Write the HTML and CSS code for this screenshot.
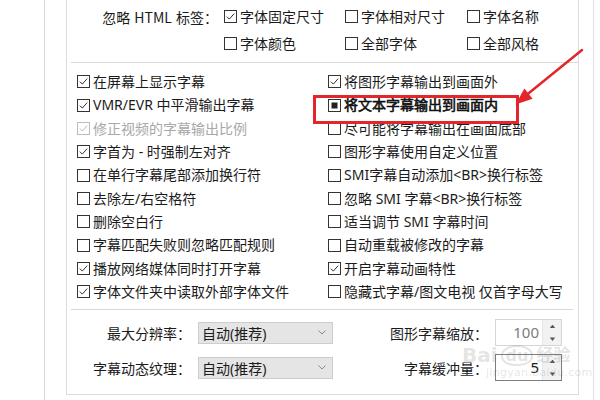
FILE: index.html
```html
<!DOCTYPE html>
<html lang="zh-CN">
<head>
<meta charset="utf-8">
<link rel="stylesheet" href="styles.css">
</head>
<body>
<div class="page">
  <div class="gutter"></div>
  <div class="panel">
    <div class="group">
      <div class="tags">
        <div class="tag-label">忽略 HTML 标签：</div>
        <div class="cb"><svg class="box" viewBox="0 0 13 13"><rect x="0.5" y="0.5" width="12" height="12"/><path d="M2.8 6.6 L5.3 9.1 L10.2 3.6"/></svg><span>字体固定尺寸</span></div>
        <div class="cb"><svg class="box" viewBox="0 0 13 13"><rect x="0.5" y="0.5" width="12" height="12"/></svg><span>字体相对尺寸</span></div>
        <div class="cb"><svg class="box" viewBox="0 0 13 13"><rect x="0.5" y="0.5" width="12" height="12"/></svg><span>字体名称</span></div>
        <div></div>
        <div class="cb"><svg class="box" viewBox="0 0 13 13"><rect x="0.5" y="0.5" width="12" height="12"/></svg><span>字体颜色</span></div>
        <div class="cb"><svg class="box" viewBox="0 0 13 13"><rect x="0.5" y="0.5" width="12" height="12"/></svg><span>全部字体</span></div>
        <div class="cb"><svg class="box" viewBox="0 0 13 13"><rect x="0.5" y="0.5" width="12" height="12"/></svg><span>全部风格</span></div>
      </div>
      <div class="sep"></div>
      <div class="opts">
        <div class="cb"><svg class="box" viewBox="0 0 13 13"><rect x="0.5" y="0.5" width="12" height="12"/><path d="M2.8 6.6 L5.3 9.1 L10.2 3.6"/></svg><span>在屏幕上显示字幕</span></div>
        <div class="cb"><svg class="box" viewBox="0 0 13 13"><rect x="0.5" y="0.5" width="12" height="12"/><path d="M2.8 6.6 L5.3 9.1 L10.2 3.6"/></svg><span>VMR/EVR 中平滑输出字幕</span></div>
        <div class="cb disabled"><svg class="box" viewBox="0 0 13 13"><rect x="0.5" y="0.5" width="12" height="12"/><path d="M2.8 6.6 L5.3 9.1 L10.2 3.6"/></svg><span>修正视频的字幕输出比例</span></div>
        <div class="cb"><svg class="box" viewBox="0 0 13 13"><rect x="0.5" y="0.5" width="12" height="12"/><path d="M2.8 6.6 L5.3 9.1 L10.2 3.6"/></svg><span>字首为 - 时强制左对齐</span></div>
        <div class="cb"><svg class="box" viewBox="0 0 13 13"><rect x="0.5" y="0.5" width="12" height="12"/></svg><span>在单行字幕尾部添加换行符</span></div>
        <div class="cb"><svg class="box" viewBox="0 0 13 13"><rect x="0.5" y="0.5" width="12" height="12"/></svg><span>去除左/右空格符</span></div>
        <div class="cb"><svg class="box" viewBox="0 0 13 13"><rect x="0.5" y="0.5" width="12" height="12"/></svg><span>删除空白行</span></div>
        <div class="cb"><svg class="box" viewBox="0 0 13 13"><rect x="0.5" y="0.5" width="12" height="12"/></svg><span>字幕匹配失败则忽略匹配规则</span></div>
        <div class="cb"><svg class="box" viewBox="0 0 13 13"><rect x="0.5" y="0.5" width="12" height="12"/><path d="M2.8 6.6 L5.3 9.1 L10.2 3.6"/></svg><span>播放网络媒体同时打开字幕</span></div>
        <div class="cb"><svg class="box" viewBox="0 0 13 13"><rect x="0.5" y="0.5" width="12" height="12"/><path d="M2.8 6.6 L5.3 9.1 L10.2 3.6"/></svg><span>字体文件夹中读取外部字体文件</span></div>

        <div class="cb"><svg class="box" viewBox="0 0 13 13"><rect x="0.5" y="0.5" width="12" height="12"/><path d="M2.8 6.6 L5.3 9.1 L10.2 3.6"/></svg><span>将图形字幕输出到画面外</span></div>
        <div class="cb marked"><svg class="box" viewBox="0 0 13 13"><rect x="0.5" y="0.5" width="12" height="12"/><rect class="fill" x="3.5" y="3.5" width="6" height="6"/></svg><span class="strong">将文本字幕输出到画面内</span></div>
        <div class="cb"><svg class="box" viewBox="0 0 13 13"><rect x="0.5" y="0.5" width="12" height="12"/></svg><span>尽可能将字幕输出在画面底部</span></div>
        <div class="cb"><svg class="box" viewBox="0 0 13 13"><rect x="0.5" y="0.5" width="12" height="12"/></svg><span>图形字幕使用自定义位置</span></div>
        <div class="cb"><svg class="box" viewBox="0 0 13 13"><rect x="0.5" y="0.5" width="12" height="12"/></svg><span>SMI字幕自动添加&lt;BR&gt;换行标签</span></div>
        <div class="cb"><svg class="box" viewBox="0 0 13 13"><rect x="0.5" y="0.5" width="12" height="12"/></svg><span>忽略 SMI 字幕&lt;BR&gt;换行标签</span></div>
        <div class="cb"><svg class="box" viewBox="0 0 13 13"><rect x="0.5" y="0.5" width="12" height="12"/></svg><span>适当调节 SMI 字幕时间</span></div>
        <div class="cb"><svg class="box" viewBox="0 0 13 13"><rect x="0.5" y="0.5" width="12" height="12"/></svg><span>自动重载被修改的字幕</span></div>
        <div class="cb"><svg class="box" viewBox="0 0 13 13"><rect x="0.5" y="0.5" width="12" height="12"/><path d="M2.8 6.6 L5.3 9.1 L10.2 3.6"/></svg><span>开启字幕动画特性</span></div>
        <div class="cb"><svg class="box" viewBox="0 0 13 13"><rect x="0.5" y="0.5" width="12" height="12"/></svg><span>隐藏式字幕/图文电视 仅首字母大写</span></div>
      </div>
      <div class="sep sep2"></div>
      <div class="form">
        <div class="flabel">最大分辨率：</div>
        <div class="select"><span>自动(推荐)</span><svg class="chev" viewBox="0 0 8 5"><path d="M0.5 0.5 L4 4 L7.5 0.5"/></svg></div>
        <div class="flabel">图形字幕缩放：</div>
        <div class="spin"><span class="val muted">100</span><span class="btns"><svg viewBox="0 0 6 4"><path d="M0 4 L3 0 L6 4Z"/></svg><svg viewBox="0 0 6 4"><path d="M0 0 L6 0 L3 4Z"/></svg></span></div>
        <div class="flabel">字幕动态纹理：</div>
        <div class="select"><span>自动(推荐)</span><svg class="chev" viewBox="0 0 8 5"><path d="M0.5 0.5 L4 4 L7.5 0.5"/></svg></div>
        <div class="flabel">字幕缓冲量：</div>
        <div class="spin focus"><span class="val">5</span><span class="btns"><svg viewBox="0 0 6 4"><path d="M0 4 L3 0 L6 4Z"/></svg><svg viewBox="0 0 6 4"><path d="M0 0 L6 0 L3 4Z"/></svg></span></div>
      </div>
    </div>
  </div>
  <div class="rest"></div>

  <svg class="arrow" viewBox="0 0 600 400">
    <line x1="582" y1="50" x2="524" y2="97"/>
    <polygon points="515.5,104.5 532.6,98.8 524.4,88.6"/>
  </svg>

  <div class="watermark">
    <div class="wm-top"><span class="wm-bai">Bai</span><span class="wm-du">du</span><span class="wm-jy">经验</span></div>
    <div class="wm-url">jingyan.baidu.com</div>
  </div>
</div>
</body>
</html>
```

FILE: styles.css
```css
* { box-sizing: border-box; }
html, body { margin: 0; padding: 0; background: #fff; }
body {
  width: 600px;
  height: 400px;
  overflow: hidden;
  font-family: "Noto Sans", "Noto Sans CJK SC", sans-serif;
  font-size: 14px;
  color: #1b1b1b;
}
.page {
  position: relative;
  display: flex;
  width: 600px;
  height: 400px;
}
.gutter {
  width: 45px;
  height: 400px;
  border-right: 1px solid #dadada;
}
.panel {
  width: 549px;
  height: 400px;
  padding-left: 21px;
  border-right: 1px solid #e2e2e2;
}
.rest { flex: 1; }
.group {
  width: 513px;
  height: 395px;
  border: 1px solid #dcdcdc;
  border-top: none;
}

.cb {
  display: flex;
  align-items: center;
  white-space: nowrap;
  line-height: 1;
}
.box {
  width: 13px;
  height: 13px;
  flex: none;
  margin-right: 3px;
}
.box rect { fill: #fff; stroke: #333; stroke-width: 1; }
.box path { fill: none; stroke: #333; stroke-width: 1; }
.box rect.fill { fill: #222; stroke: none; }
.disabled { color: #a8a8a8; }
.disabled .box rect { stroke: #bdbdbd; }
.disabled .box path { stroke: #bdbdbd; }
.strong {
  color: #111;
  -webkit-text-stroke: 0.6px #111;
}

.tags {
  display: grid;
  grid-template-columns: 157px 121px 122px 1fr;
  grid-auto-rows: 27px;
  padding-top: 3px;
  align-items: center;
}
.tag-label {
  text-align: right;
  padding-right: 6px;
  font-family: "Noto Sans CJK SC", sans-serif;
  word-spacing: 1px;
}

.sep {
  height: 1px;
  background: #d9d9d9;
  margin: 5px 0 0 4px;
}
.sep2 {
  margin: 5.33px 5px 0 4px;
}

.opts {
  display: grid;
  grid-template-columns: 251px 1fr;
  grid-template-rows: repeat(10, 23.33px);
  grid-auto-flow: column;
  padding: 7.33px 0 0 10px;
  align-items: center;
}
.marked { position: relative; height: 100%; }
.marked::before {
  content: "";
  position: absolute;
  left: -15px;
  top: 1.33px;
  width: 200px;
  height: 23px;
  border: 3px solid #e3262c;
}

.form {
  display: grid;
  grid-template-columns: 116px 135px 132px 67px;
  grid-auto-rows: 35px;
  column-gap: 15px;
  padding-top: 5.5px;
  align-items: center;
}
.flabel {
  text-align: right;
  white-space: nowrap;
  margin-right: -8px;
}
.select {
  height: 22px;
  background: #e5e5e5;
  border: 1px solid #cdcdcd;
  display: flex;
  align-items: center;
  justify-content: space-between;
  padding: 0 6px 0 3px;
  white-space: nowrap;
}
.chev { width: 8px; height: 5px; }
.chev path { fill: none; stroke: #8a8a8a; stroke-width: 1; }

.spin {
  height: 27px;
  border: 1px solid #d6d6d6;
  background: #fff;
  display: flex;
}
.spin.focus { border-color: #7d7d7d; }
.val {
  flex: 1;
  text-align: right;
  padding-right: 3px;
  line-height: 25px;
  font-size: 15px;
  color: #222;
}
.val.muted { color: #7b7b7b; }
.btns {
  width: 19px;
  display: flex;
  flex-direction: column;
  background: #f2f2f2;
  border-left: 1px solid #e6e6e6;
}
.btns svg {
  flex: 1;
  width: 19px;
  height: 12.5px;
  padding: 4.5px 6.5px;
}
.btns svg path { fill: #555; }

.arrow {
  position: absolute;
  left: 0;
  top: 0;
  width: 600px;
  height: 400px;
  pointer-events: none;
}
.arrow line { stroke: #e3262c; stroke-width: 2.5; stroke-linecap: round; }
.arrow polygon { fill: #e3262c; }

.watermark {
  position: absolute;
  left: 462px;
  top: 344px;
  pointer-events: none;
  color: rgba(120, 120, 120, 0.2);
  font-family: "DejaVu Sans", "Noto Sans CJK SC", sans-serif;
}
.wm-top {
  display: flex;
  align-items: flex-end;
  font-size: 20px;
  font-weight: bold;
  line-height: 22px;
}
.wm-du {
  font-size: 16px;
  border: 2px solid rgba(120, 120, 120, 0.2);
  border-radius: 50% 50% 45% 45%;
  padding: 0 3px;
  margin: 0 3px;
  line-height: 17px;
}
.wm-jy { font-size: 17px; }
.wm-url {
  font-size: 11px;
  padding-left: 24px;
  line-height: 13px;
  letter-spacing: 0.3px;
}
```
